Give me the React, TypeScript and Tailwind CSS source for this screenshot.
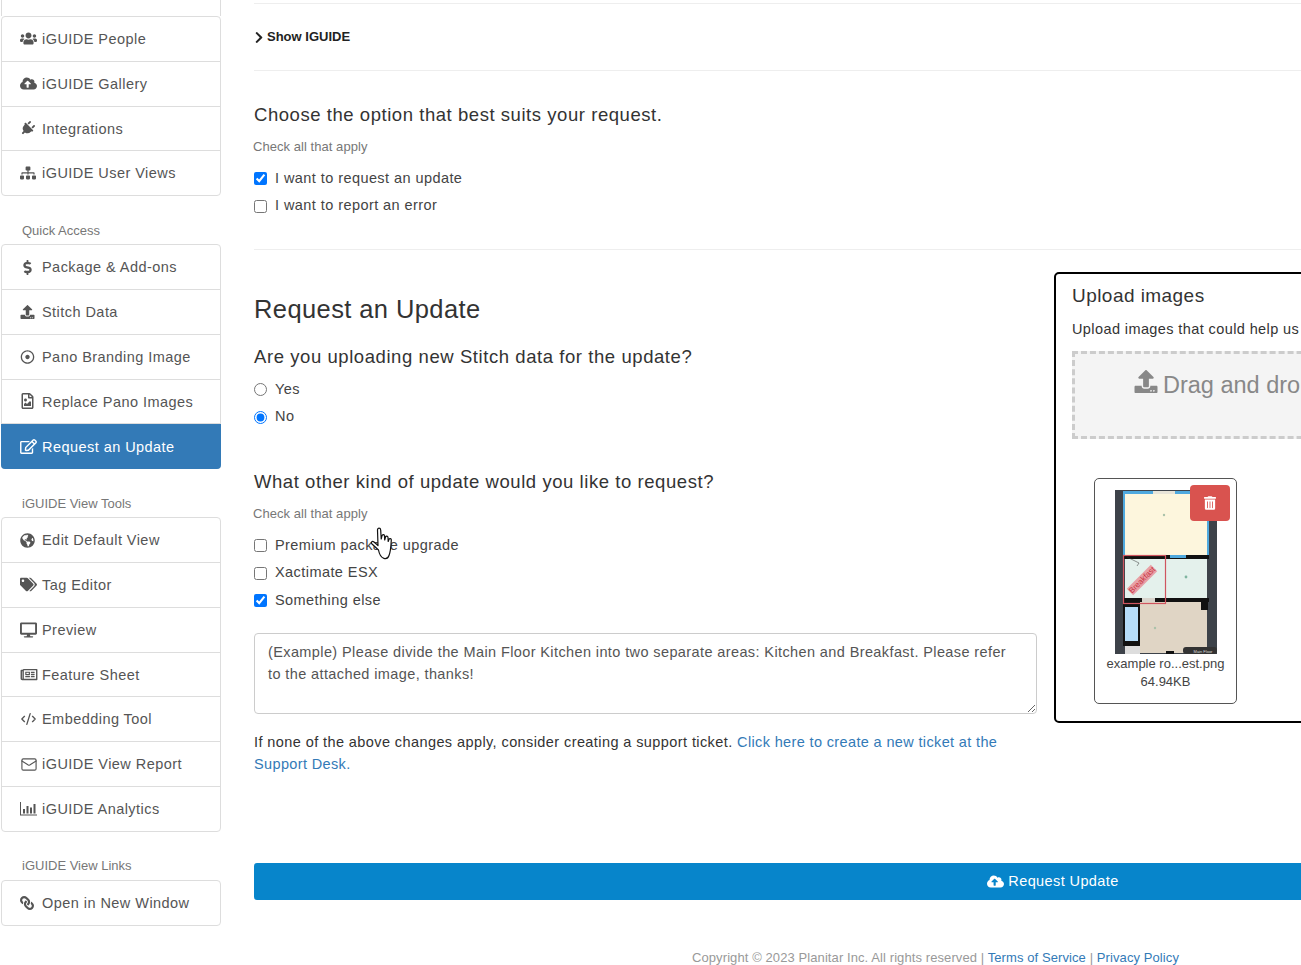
import React from 'react';
import {
  FaUsers, FaCloudUploadAlt, FaPlug, FaSitemap, FaDollarSign, FaUpload, FaRegDotCircle, FaRegFileImage,
  FaRegEdit, FaGlobeAmericas, FaTags, FaDesktop, FaRegNewspaper, FaLink, FaChevronRight, FaTrashAlt,
} from 'react-icons/fa';
import { CodeXml, Mail } from 'lucide-react';

const FONT = "font-['Liberation_Sans',Arial,sans-serif]";

interface NavItem {
  label: string;
  icon: React.ReactNode;
  active?: boolean;
}

// FA4 style bar-chart: L shaped axis with four bars
const BarChartIcon = () => (
  <svg viewBox="0 0 17 15" className="w-[17px] h-[15px]" fill="currentColor">
    <path d="M0 1h1v12.5h16v1H0z" />
    <rect x="3" y="8" width="2" height="4.5" />
    <rect x="6.5" y="5" width="2" height="7.5" />
    <rect x="10" y="6.5" width="2" height="6" />
    <rect x="13.5" y="3" width="2" height="9.5" />
  </svg>
);

const topItems: NavItem[] = [
  { label: 'iGUIDE People', icon: <FaUsers className="w-[17px] h-[15px]" /> },
  { label: 'iGUIDE Gallery', icon: <FaCloudUploadAlt className="w-[17px] h-[15px]" /> },
  { label: 'Integrations', icon: <FaPlug className="w-[15px] h-[15px] rotate-45" /> },
  { label: 'iGUIDE User Views', icon: <FaSitemap className="w-[16px] h-[14px]" /> },
];

const quickItems: NavItem[] = [
  { label: 'Package & Add-ons', icon: <FaDollarSign className="w-[15px] h-[15px]" /> },
  { label: 'Stitch Data', icon: <FaUpload className="w-[15px] h-[14px]" /> },
  { label: 'Pano Branding Image', icon: <FaRegDotCircle className="w-[15px] h-[14px]" /> },
  { label: 'Replace Pano Images', icon: <FaRegFileImage className="w-[15px] h-[16px]" /> },
  { label: 'Request an Update', icon: <FaRegEdit className="w-[17px] h-[15px]" />, active: true },
];

const toolItems: NavItem[] = [
  { label: 'Edit Default View', icon: <FaGlobeAmericas className="w-[15px] h-[15px]" /> },
  { label: 'Tag Editor', icon: <FaTags className="w-[17px] h-[15px]" /> },
  { label: 'Preview', icon: <FaDesktop className="w-[17px] h-[16px]" /> },
  { label: 'Feature Sheet', icon: <FaRegNewspaper className="w-[18px] h-[15px]" /> },
  { label: 'Embedding Tool', icon: <CodeXml className="w-[17px] h-[16px]" strokeWidth={2} /> },
  { label: 'iGUIDE View Report', icon: <Mail className="w-[18px] h-[17px]" strokeWidth={1.6} /> },
  { label: 'iGUIDE Analytics', icon: <BarChartIcon /> },
];

const linkItems: NavItem[] = [{ label: 'Open in New Window', icon: <FaLink className="w-[14px] h-[14px] -scale-x-100" /> }];

const NavGroup = ({ items }: { items: NavItem[] }) => (
  <div className="w-[220px] ml-px border border-[#ddd] rounded-[4px]">
    {items.map((item, i) => (
      <div
        key={item.label}
        className={
          'flex items-center text-[14.5px] tracking-[0.45px] ' +
          (i > 0 ? 'border-t border-[#ddd] ' : '') +
          (item.active
            ? 'h-[45.8px] -mx-px -mb-px bg-[#337ab7] text-white rounded-b-[4px] px-[19px]'
            : (i > 0 ? 'h-[44.8px] ' : 'h-[43.8px] ') + 'text-[#555] px-[18px]')
        }
      >
        <span className="w-[22px] shrink-0 flex items-center">{item.icon}</span>
        <span className="mt-[2px]">{item.label}</span>
      </div>
    ))}
  </div>
);

const GroupLabel = ({ children }: { children: React.ReactNode }) => (
  <div className="h-[48px] pl-[22px] pb-[4px] flex items-end text-[13px] text-[#777]">{children}</div>
);

const Option = ({ type, label, checked, name }: { type: string; label: string; checked?: boolean; name?: string }) => (
  <label className="flex items-center h-[27.5px] text-[14.5px] tracking-[0.43px] text-[#444]">
    <input type={type} name={name} defaultChecked={checked} className="w-[13px] h-[13px] m-0 mr-[8px]" />
    {label}
  </label>
);

const FloorPlan = () => (
  <svg viewBox="0 0 102 164" className="w-[102px] h-[164px] block">
    <rect width="102" height="164" fill="#3d4249" />
    <rect x="8" y="1" width="86" height="67" fill="#4fa9de" />
    <rect x="10" y="4" width="82" height="61" fill="#fdf6dd" />
    <rect x="38" y="1" width="22" height="3" fill="#e8e4d8" />
    <rect x="8" y="65" width="86" height="4" fill="#111" />
    <rect x="55" y="65" width="16" height="3" fill="#4fa9de" />
    <rect x="10" y="69" width="82" height="40" fill="#e4f1ec" />
    <rect x="8" y="108" width="86" height="4" fill="#111" />
    <rect x="27" y="108" width="13" height="4" fill="#d8d4cc" />
    <rect x="25" y="112" width="67" height="51" fill="#e0d5c5" />
    <rect x="86" y="109" width="7" height="11" fill="#111" />
    <rect x="8" y="112" width="17" height="44" fill="#111" />
    <rect x="10" y="117" width="13" height="34" fill="#b5dcf8" />
    <rect x="10" y="156" width="15" height="8" fill="#ddd" />
    <rect x="51" y="161" width="8" height="3" fill="#111" />
    <rect x="8.5" y="65.5" width="42" height="48" fill="none" stroke="#cf5560" strokeWidth="1.2" />
    <path d="M12 67l12 6-2 3" fill="none" stroke="#333" strokeWidth="0.5" />
    <circle cx="49" cy="25" r="1.2" fill="#a9c2a9" />
    <circle cx="71" cy="87" r="1.4" fill="#7fb5a0" />
    <circle cx="40" cy="138" r="1.2" fill="#a9c2a9" />
    <g transform="rotate(-45 27 90)">
      <rect x="10" y="85.5" width="34" height="9" fill="#e8a0a6" />
      <text x="27" y="92.6" textAnchor="middle" fontSize="8" fill="#c8323f" fontFamily="Liberation Sans">Breakfast</text>
    </g>
    <rect x="68" y="157" width="34" height="7" rx="3" fill="#333" />
    <text x="88" y="162.6" textAnchor="middle" fontSize="4" fill="#ddd" fontFamily="Liberation Sans">Main Floor</text>
  </svg>
);

const HandCursor = () => (
  <svg viewBox="0 0 24 34" className="absolute left-[368px] top-[527px] w-[26px] h-[34px]">
    <path
      d="M9.5 23 L3 17 C1.5 15.5 3 13.5 5 15 L9 18.5 L8.5 3 C8.5 0.5 11.5 0.5 11.7 3 L12.2 12 L13 8.7 C13.5 7 15.5 7.3 15.5 9 L15.7 13 L16.5 10 C17 8.5 19 8.8 19 10.5 L19.2 14.5 L20 12.3 C20.6 11 22.5 11.5 22.3 13 C22 19 21.5 25 20 28.5 C18.5 33 11.5 33.5 9.5 23 Z"
      fill="#fff"
      stroke="#111"
      strokeWidth="1.2"
      strokeLinejoin="round"
    />
  </svg>
);

export default function App() {
  return (
    <div className={`${FONT} relative w-[1301px] h-[965px] overflow-hidden bg-white flex`}>
      <aside className="w-[221px] shrink-0 -mt-[29px]">
        <div className="w-[220px] ml-px h-[1px]" />
        <div className="w-[220px] ml-px h-[44px] border-x border-[#ddd]" />
        <NavGroup items={topItems} />
        <GroupLabel>Quick Access</GroupLabel>
        <NavGroup items={quickItems} />
        <GroupLabel>iGUIDE View Tools</GroupLabel>
        <NavGroup items={toolItems} />
        <GroupLabel>iGUIDE View Links</GroupLabel>
        <NavGroup items={linkItems} />
      </aside>

      <main className="ml-[33px] w-[1598px] shrink-0 pt-[3px]">
        <div className="border-t border-[#eee] h-[67px] flex items-center text-[13px] font-bold text-[#222]">
          <FaChevronRight className="w-[10px] h-[13px] mr-[3px]" />
          Show IGUIDE
        </div>
        <section className="border-t border-[#eee] h-[179px] pt-[30px]">
          <h3 className="text-[18.5px] leading-[28px] tracking-[0.55px] text-[#333]">Choose the option that best suits your request.</h3>
          <p className="mt-[9px] -ml-px text-[13px] leading-[18px] tracking-[0.05px] text-[#777]">Check all that apply</p>
          <div className="mt-[9px]">
            <Option type="checkbox" label="I want to request an update" checked />
            <Option type="checkbox" label="I want to report an error" />
          </div>
        </section>

        <div className="border-t border-[#eee] flex items-start gap-[17px]">
          <div className="w-[783px] shrink-0">
            <h2 className="mt-[42px] text-[25.5px] leading-[34px] tracking-[0.4px] text-[#333]">Request an Update</h2>
            <h3 className="mt-[17px] text-[18.5px] leading-[28px] tracking-[0.57px] text-[#333]">Are you uploading new Stitch data for the update?</h3>
            <div className="mt-[5px]">
              <Option type="radio" name="stitch" label="Yes" />
              <Option type="radio" name="stitch" label="No" checked />
            </div>
            <h3 className="mt-[37px] text-[18.5px] leading-[28px] tracking-[0.56px] text-[#333]">What other kind of update would you like to request?</h3>
            <p className="mt-[9px] -ml-px text-[13px] leading-[18px] tracking-[0.05px] text-[#777]">Check all that apply</p>
            <div className="mt-[9px]">
              <Option type="checkbox" label="Premium package upgrade" />
              <Option type="checkbox" label="Xactimate ESX" />
              <Option type="checkbox" label="Something else" checked />
            </div>
            <textarea
              readOnly
              className="block mt-[18px] w-full h-[81px] border border-[#ccc] rounded-[4px] px-[13px] py-[7px] text-[14.5px] leading-[22px] tracking-[0.39px] text-[#555]"
              value="(Example) Please divide the Main Floor Kitchen into two separate areas: Kitchen and Breakfast. Please refer to the attached image, thanks!"
            />
            <p className="mt-[17px] text-[14.5px] leading-[22px] tracking-[0.41px] text-[#333]">
              If none of the above changes apply, consider creating a support ticket.{' '}
              <span className="text-[#337ab7] tracking-[0.36px]">Click here to create a new ticket at the Support Desk.</span>
            </p>
          </div>

          <div className="mt-[22px] w-[600px] h-[451px] border-2 border-black rounded-[5px] pl-[16px] pt-[9px]">
            <h3 className="text-[19px] leading-[26px] tracking-[0.45px] text-[#333]">Upload images</h3>
            <p className="mt-[10px] text-[14.5px] leading-[20px] tracking-[0.4px] text-[#333]">Upload images that could help us understand your request</p>
            <div className="mt-[12px] w-[500px] h-[88px] border-[3px] border-dashed border-[#ccc] bg-[#f4f4f4] pl-[59px] pt-[16px] flex items-start text-[23.5px] leading-[30px] text-[#888]">
              <FaUpload className="w-[24px] h-[23px] mr-[5px]" />
              Drag and drop images here
            </div>
            <div className="relative mt-[39px] ml-[22px] w-[143px] h-[226px] border border-[#555] rounded-[5px] pt-[11px] text-center text-[13px] leading-[18px] text-[#444]">
              <div className="flex justify-center">
                <FloorPlan />
              </div>
              <div className="absolute left-[95px] top-[6px] w-[40px] h-[36px] bg-[#d9534f] rounded-[4px] flex items-center justify-center text-white">
                <FaTrashAlt className="w-[12px] h-[14px]" />
              </div>
              <div className="mt-px">example ro...est.png</div>
              <div>64.94KB</div>
            </div>
          </div>
        </div>

        <button className="absolute left-[254px] top-[863px] w-[1598px] h-[37px] bg-[#0785cb] rounded-[3px] text-white text-[14.5px] tracking-[0.4px] flex items-center justify-center">
          <FaCloudUploadAlt className="w-[17px] h-[15px] mr-[4px]" />
          Request Update
        </button>
        <div className="absolute left-[692px] top-[949px] text-[13px] leading-[18px] tracking-[0.09px] text-[#999] whitespace-nowrap">
          Copyright © 2023 Planitar Inc. All rights reserved | <span className="text-[#337ab7]">Terms of Service</span> | <span className="text-[#337ab7]">Privacy Policy</span>
        </div>
      </main>
      <HandCursor />
    </div>
  );
}
